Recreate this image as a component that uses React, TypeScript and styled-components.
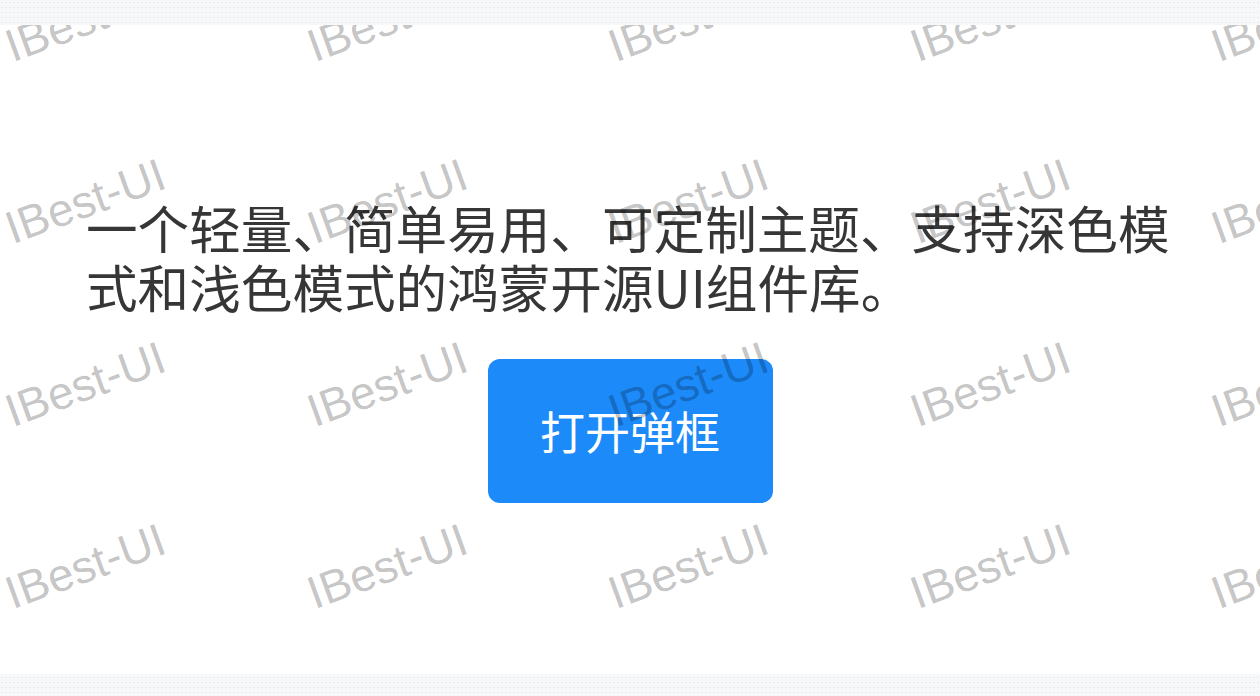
import React from "react";
import styled, { createGlobalStyle } from "styled-components";

const GlobalStyle = createGlobalStyle`
  html, body {
    margin: 0;
    padding: 0;
  }

  body {
    background-color: #f7f8fa;
    background-image: radial-gradient(#e9ebef 0.7px, transparent 0.9px);
    background-size: 4px 5px;
    font-family: "Noto Sans CJK SC", "Noto Sans", sans-serif;
    height: 696px;
    overflow: hidden;
  }
`;

const Page = styled.div`
  padding-top: 25px;
  height: 696px;
  box-sizing: border-box;
`;

const Card = styled.section`
  position: relative;
  height: 649px;
  background: #ffffff;
  overflow: hidden;
  display: flex;
  flex-direction: column;
  align-items: center;
  justify-content: center;
  gap: 44px;
  padding: 0 86px;
  box-sizing: border-box;
`;

const Intro = styled.p`
  margin: 0;
  align-self: stretch;
  font-size: 51.6px;
  line-height: 59px;
  color: #363636;
`;

const OpenButton = styled.button`
  width: 285px;
  height: 144px;
  border: none;
  border-radius: 12px;
  background: #1c8af9;
  color: #ffffff;
  font-family: "Noto Sans CJK SC", sans-serif;
  font-size: 45px;
  cursor: pointer;
`;

// watermark tiles laid on top of the card
const Watermark = styled.div`
  position: absolute;
  left: 0;
  right: 0;
  top: -146px;
  bottom: -200px;
  pointer-events: none;
  display: grid;
  grid-template-columns: repeat(5, 301.5px);
  grid-auto-rows: 182.5px;
  align-content: start;
`;

const Cell = styled.div`
  position: relative;
`;

const Mark = styled.span`
  position: absolute;
  left: 0;
  bottom: 0;
  font-family: "Liberation Sans", "Noto Sans", sans-serif;
  font-weight: 400;
  font-size: 46px;
  line-height: 1;
  white-space: nowrap;
  color: rgba(0, 0, 0, 0.24);
  transform-origin: 0 100%;
  transform: translate(15px, 7px) rotate(-20deg);
`;

const App = () => {
  const cells = Array.from({ length: 30 });

  return (
    <>
      <GlobalStyle />
      <Page>
        <Card>
          <Intro>
            一个轻量、简单易用、可定制主题、支持深色模式和浅色模式的鸿蒙开源UI组件库。
          </Intro>
          <OpenButton>打开弹框</OpenButton>
          <Watermark>
            {cells.map((_, i) => (
              <Cell key={i}>
                <Mark>IBest-UI</Mark>
              </Cell>
            ))}
          </Watermark>
        </Card>
      </Page>
    </>
  );
};

export default App;
